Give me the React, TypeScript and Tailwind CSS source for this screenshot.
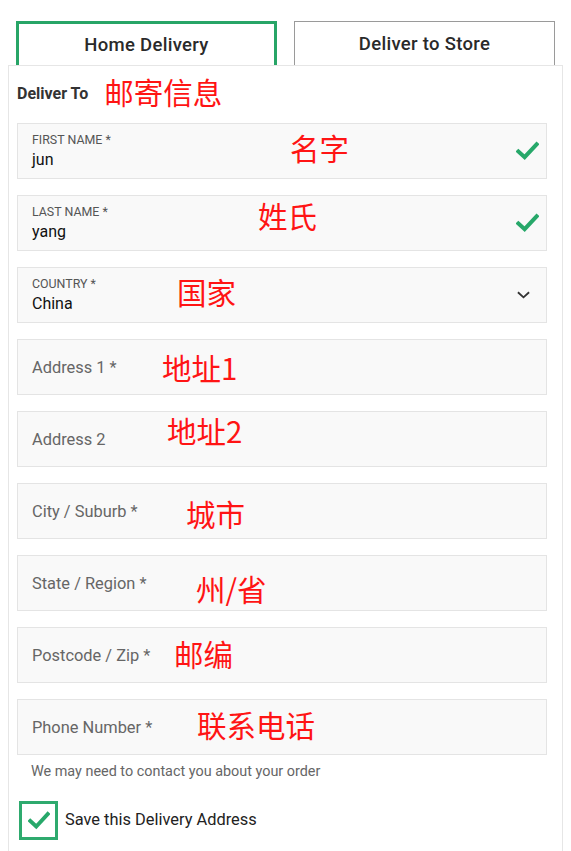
const font = { fontFamily: "Roboto, 'Noto Sans CJK SC', sans-serif" };
const cjk = { fontFamily: "'Noto Sans CJK SC', sans-serif" };

type Field = {
  label: string;
  value?: string;
  note: string;
  noteClass: string;
  icon?: "check" | "chevron";
};

const fields: Field[] = [
  { label: "FIRST NAME *", value: "jun", note: "名字", noteClass: "left-[272px] top-[6px]", icon: "check" },
  { label: "LAST NAME *", value: "yang", note: "姓氏", noteClass: "left-[240px] top-[2px]", icon: "check" },
  { label: "COUNTRY *", value: "China", note: "国家", noteClass: "left-[159px] top-[6px]", icon: "chevron" },
  { label: "Address 1 *", note: "地址1", noteClass: "left-[144px] top-[10px]" },
  { label: "Address 2", note: "地址2", noteClass: "left-[149px] top-[1px]" },
  { label: "City / Suburb *", note: "城市", noteClass: "left-[168px] top-[12px]" },
  { label: "State / Region *", note: "州/省", noteClass: "left-[178px] top-[15px]" },
  { label: "Postcode / Zip *", note: "邮编", noteClass: "left-[156px] top-[8px]" },
  { label: "Phone Number *", note: "联系电话", noteClass: "left-[179px] top-[7px]" },
];

function Check({ className }: { className?: string }) {
  return (
    <svg viewBox="0 0 24 20" className={className} fill="none">
      <path d="M2.5 10.5 L9 16.5 L21.5 3" stroke="currentColor" strokeWidth="4.2" strokeLinecap="square" />
    </svg>
  );
}

function Chevron() {
  return (
    <svg viewBox="0 0 14 8" className="w-[13px] h-[8px] text-[#333]" fill="none">
      <path d="M1 1 L7 6.5 L13 1" stroke="currentColor" strokeWidth="2" />
    </svg>
  );
}

function InputField({ f }: { f: Field }) {
  return (
    <div className="relative h-[56px] border border-[#e4e4e4] bg-[#f9f9f9] flex items-center pl-[14px] pr-[7px]">
      {f.value ? (
        <div className="flex-1 flex flex-col self-start pt-[9px]">
          <span className="text-[12.4px] leading-[14px] text-[#555]">{f.label}</span>
          <span className="text-[16px] leading-[20px] text-[#111] mt-[3px]">{f.value}</span>
        </div>
      ) : (
        <span className="flex-1 text-[16.4px] text-[#666] mt-[3px]">{f.label}</span>
      )}
      {f.icon === "check" && <Check className="w-[23px] h-[20px] text-[#27a86a]" />}
      {f.icon === "chevron" && (
        <div className="pr-[9px]">
          <Chevron />
        </div>
      )}
      <span className={`absolute ${f.noteClass} text-[29.5px] leading-[34px] text-[#ff1414]`} style={cjk}>
        {f.note}
      </span>
    </div>
  );
}

export default function App() {
  return (
    <main className="min-h-screen bg-white pt-[21px]" style={font}>
      <div className="flex pl-[16px] gap-[17px]">
        <div className="w-[261px] h-[44px] border-t-[3px] border-x-[3px] border-[#27a567] flex items-center justify-center">
          <span className="text-[18.5px] font-medium text-[#2a2a2a] tracking-[0.3px] mt-[3px]">Home Delivery</span>
        </div>
        <div className="w-[261px] h-[44px] border-t border-x border-[#9a9a9a] flex items-center justify-center">
          <span className="text-[18.5px] font-medium text-[#2a2a2a] tracking-[0.3px] mt-[3px]">Deliver to Store</span>
        </div>
      </div>
      <div className="relative mx-[8px] border border-[#e6e6e6] bg-white pl-[8px] pr-[15px] pb-[20px]">
        <div className="h-[52px] flex items-center">
          <span className="text-[16px] font-bold text-[#333] mt-[3px]">Deliver To</span>
          <span className="ml-[16px] mb-[3px] text-[29.5px] leading-[34px] text-[#ff1414]" style={cjk}>
            邮寄信息
          </span>
        </div>
        <div className="flex flex-col gap-[16px] pt-[5px]">
          {fields.map((f) => (
            <InputField key={f.label} f={f} />
          ))}
        </div>
        <p className="mt-[7px] pl-[14px] text-[14.4px] leading-[20px] text-[#666]">
          We may need to contact you about your order
        </p>
        <label className="mt-[19px] ml-[2px] flex items-center gap-[7px]">
          <span className="w-[39px] h-[39px] border-[3px] border-[#2eaa6e] flex items-center justify-center">
            <Check className="w-[22px] h-[19px] text-[#27a86a]" />
          </span>
          <span className="text-[16.4px] text-[#222]">Save this Delivery Address</span>
        </label>
      </div>
    </main>
  );
}
